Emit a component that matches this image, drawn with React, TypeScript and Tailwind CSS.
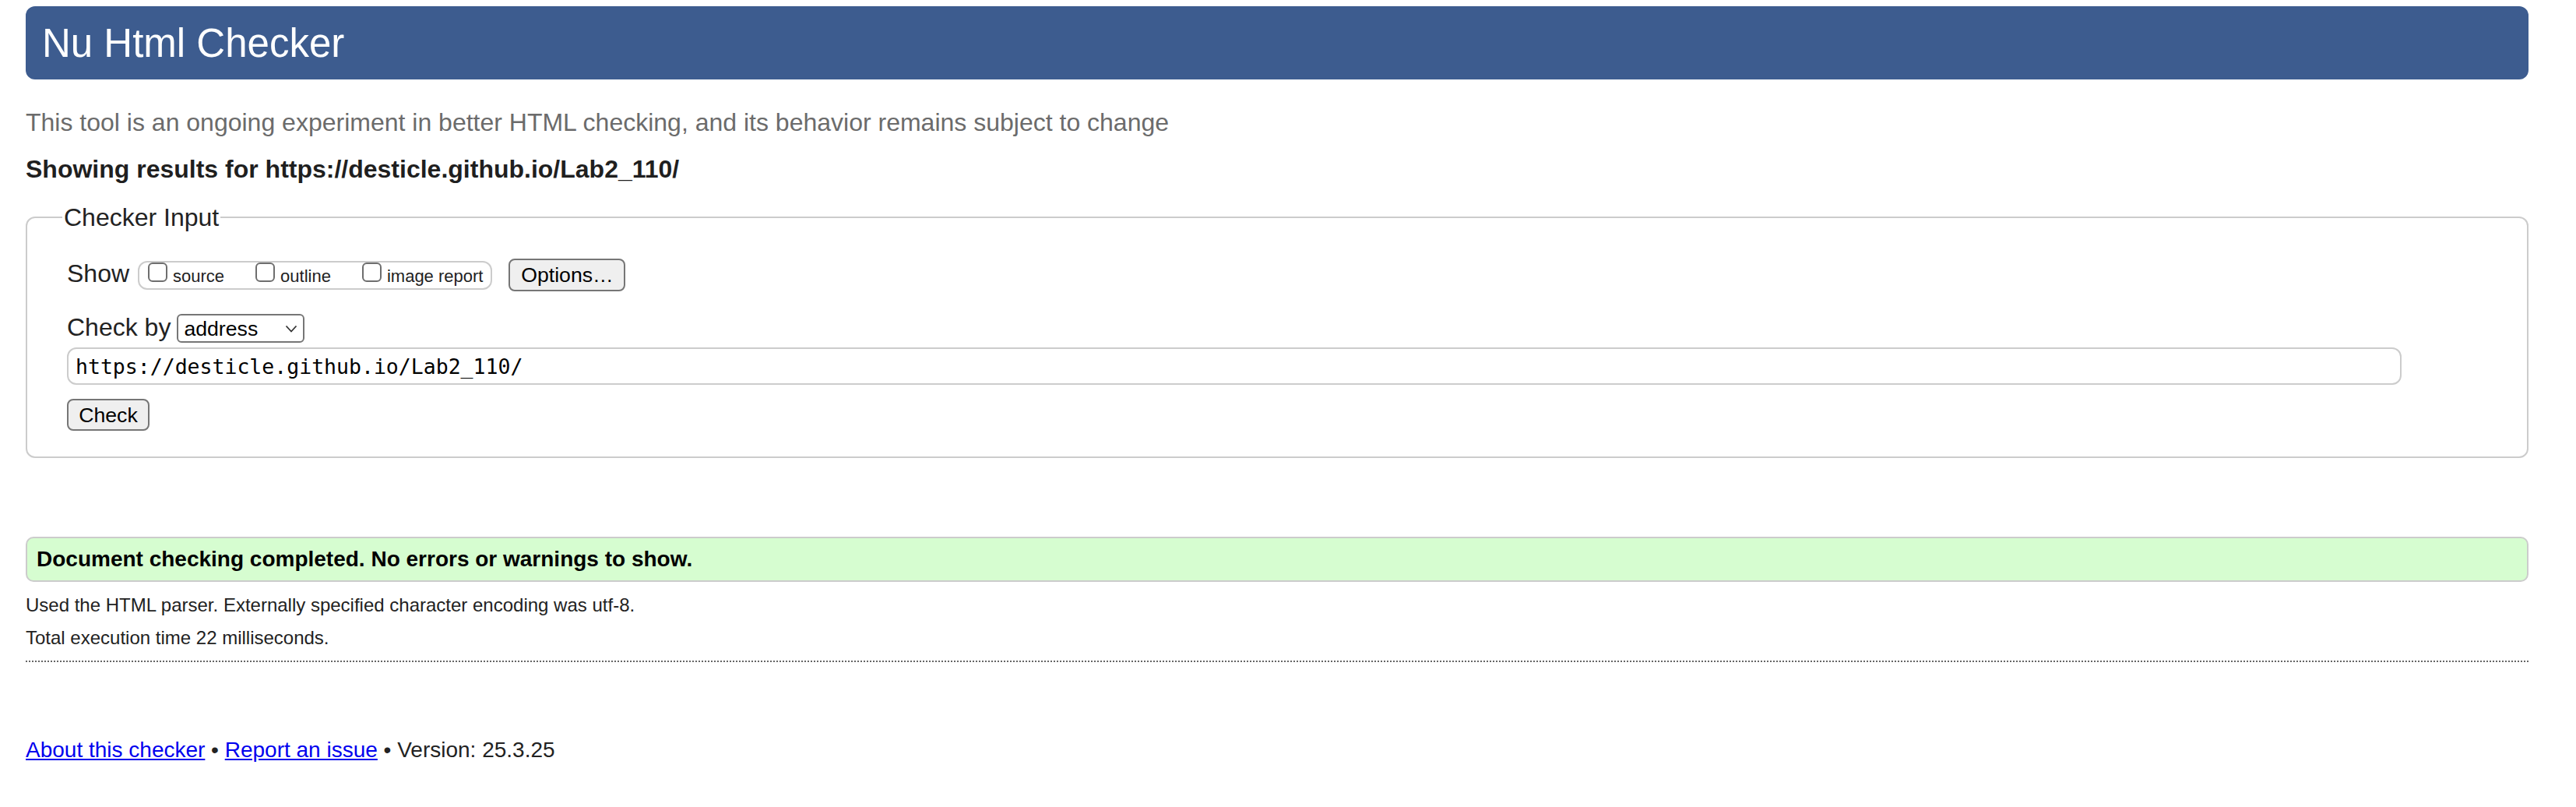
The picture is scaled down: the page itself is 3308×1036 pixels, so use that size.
import React from 'react';

function Box({ className = '' }: { className?: string }) {
  return (
    <span
      className={`inline-block h-[25px] w-[25px] shrink-0 rounded-[6px] border-2 border-[#6e6e6e] bg-white ${className}`}
    />
  );
}

export default function App() {
  return (
    <div className="min-h-screen bg-white pl-[33px] pr-[61px] pt-[8px] font-['Liberation_Sans',Arial,sans-serif] text-[#222]">
      <header className="flex h-[94px] items-center rounded-[12px] bg-[#3d5c8f] pl-[21px]">
        <h1 className="text-[51px] leading-none text-white">Nu Html Checker</h1>
      </header>

      <p className="mt-[35px] text-[32px] leading-[40px] text-[#6b6b6b]">
        This tool is an ongoing experiment in better HTML checking, and its behavior remains subject to change
      </p>
      <p className="mt-[20px] text-[32px] font-bold leading-[40px] text-[#1f1f1f]">
        Showing results for https://desticle.github.io/Lab2_110/
      </p>

      <fieldset className="mt-[20px] rounded-[12px] border-2 border-[#ccc] pb-[33px] pl-[45px] pr-[20px]">
        <legend className="px-[2px] text-[32px] leading-[44px]">Checker Input</legend>
        <div className="pl-[6px] pt-[31px]">
          {/* show options */}
          <div className="flex items-baseline">
            <span className="text-[32px] leading-none">Show</span>
            <div className="ml-[11px] flex h-[37px] items-baseline rounded-[12px] border-2 border-[#ccc] pl-[11px] pr-[10px] text-[22px] leading-[25px]">
              <Box />
              <span className="ml-[7px]">source</span>
              <Box className="ml-[40px]" />
              <span className="ml-[7px]">outline</span>
              <Box className="ml-[40px]" />
              <span className="ml-[7px]">image report</span>
            </div>
            <button className="ml-[21px] flex h-[42px] w-[150px] items-center justify-center rounded-[8px] border-2 border-[#767676] bg-[#efefef] text-[26.67px] leading-[30px] text-black">
              Options…
            </button>
          </div>

          {/* check by */}
          <div className="mt-[29px] flex items-baseline">
            <span className="text-[32px] leading-none">Check by</span>
            <div className="ml-[8px] flex h-[37px] w-[164px] items-center justify-between rounded-[6px] border-2 border-[#767676] bg-white pl-[7px] pr-[7px] text-[26.67px] leading-[30px] text-black">
              <span>address</span>
              <svg width="16" height="10" viewBox="0 0 16 10" className="mt-[1px]">
                <polyline points="1.5,1.5 8,8.5 14.5,1.5" fill="none" stroke="#333" strokeWidth="1.8" />
              </svg>
            </div>
          </div>

          <input
            readOnly
            defaultValue="https://desticle.github.io/Lab2_110/"
            className="mt-[6px] block h-[48px] w-[2998px] rounded-[12px] border-2 border-[#ccc] bg-white pl-[9px] font-['DejaVu_Sans_Mono',monospace] text-[26.5px] text-black outline-none"
          />

          <button className="mt-[18px] flex h-[41px] w-[106px] items-center justify-center rounded-[8px] border-2 border-[#767676] bg-[#efefef] text-[26.67px] leading-[30px] text-black">
            Check
          </button>
        </div>
      </fieldset>

      <div className="mt-[101px] flex h-[58px] items-center rounded-[10px] border-2 border-[#ccc] bg-[#d6fdd0] pl-[12px]">
        <p className="text-[28px] font-bold leading-none text-black">
          Document checking completed. No errors or warnings to show.
        </p>
      </div>

      <p className="mt-[14px] text-[24px] leading-[32px]">
        Used the HTML parser. Externally specified character encoding was utf-8.
      </p>
      <p className="mt-[10px] text-[24px] leading-[32px]">Total execution time 22 milliseconds.</p>
      <hr className="mt-[13px] border-0 border-t-2 border-dotted border-[#666]" />

      <p className="mt-[99px] text-[28px] leading-none">
        <a href="#" className="text-[#0000ee] underline">About this checker</a>
        {' • '}
        <a href="#" className="text-[#0000ee] underline">Report an issue</a>
        {' • Version: 25.3.25'}
      </p>
    </div>
  );
}
